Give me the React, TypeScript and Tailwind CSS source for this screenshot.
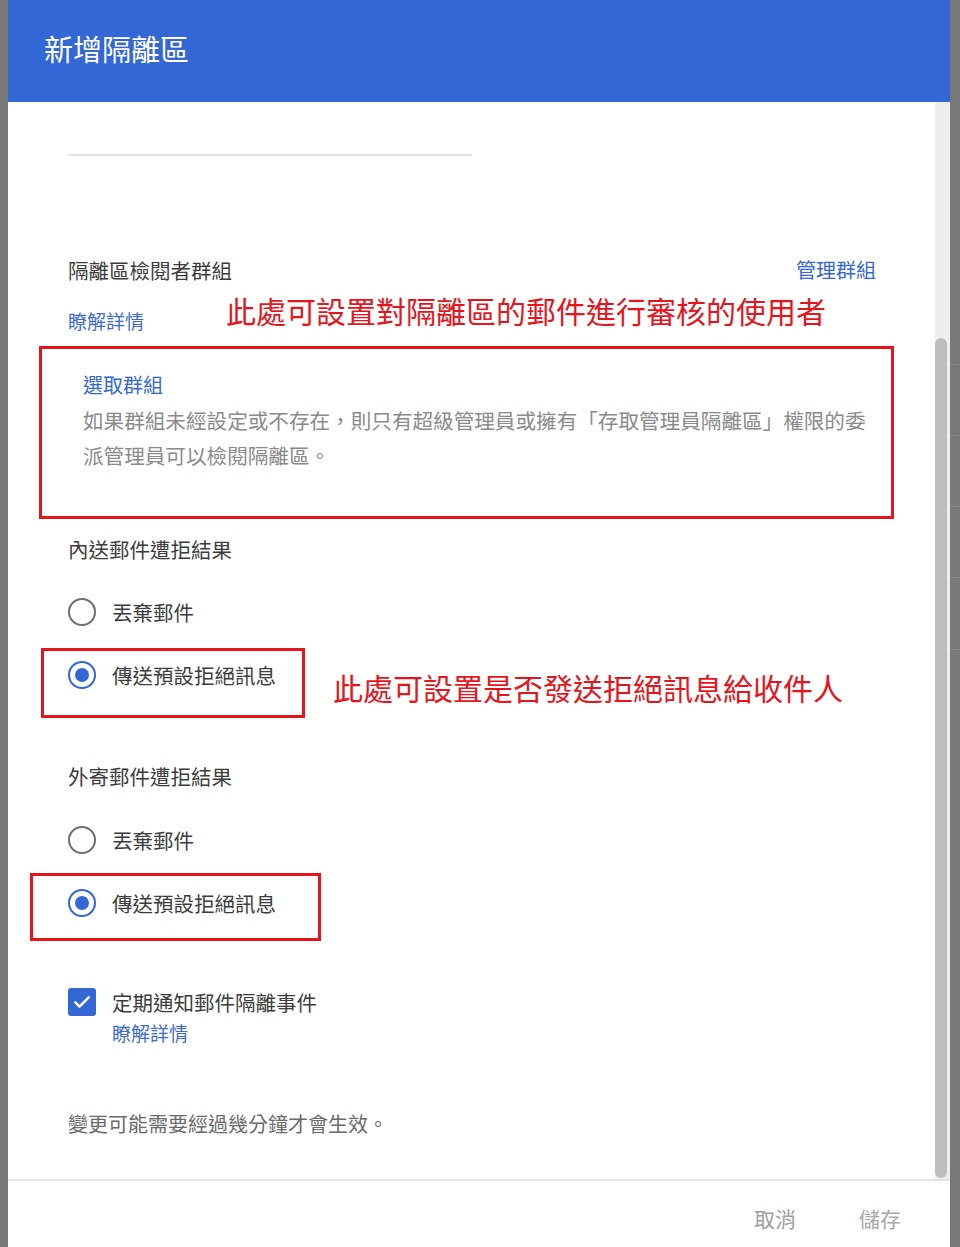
import React from "react";

const Radio: React.FC<{ checked?: boolean }> = ({ checked }) => (
  <span
    className={`flex h-[28px] w-[28px] shrink-0 items-center justify-center rounded-full border-[2.5px] ${
      checked ? "border-[#3367d6]" : "border-[#6f6f6f]"
    }`}
  >
    {checked && <span className="h-[14px] w-[14px] rounded-full bg-[#3367d6]" />}
  </span>
);

const RadioRow: React.FC<{ label: string; checked?: boolean }> = ({ label, checked }) => (
  <div className="flex items-center gap-[16px]">
    <Radio checked={checked} />
    <span className="text-[20.5px] leading-[28px] text-[#3c3c3c]">{label}</span>
  </div>
);

const App: React.FC = () => {
  return (
    <div className="flex h-[1247px] w-[960px] overflow-hidden bg-[#777777] font-['Noto_Sans_CJK_TC',sans-serif]">
      {/* backdrop left */}
      <div className="w-[8px] shrink-0 bg-[#7a7a7a]" />

      {/* Dialog */}
      <div className="flex w-[942px] shrink-0 flex-col bg-white">
        {/* Header */}
        <div className="flex h-[102px] shrink-0 items-start bg-[#3367d6] pl-[36px] pt-[28px]">
          <h1 className="text-[29px] leading-[40px] text-white">新增隔離區</h1>
        </div>

        {/* Body */}
        <div className="flex h-[1077px] shrink-0">
          <div className="flex flex-1 flex-col pl-[60px]">
            <div className="mt-[52px] h-[2px] w-[404px] bg-[#e3e3e3]" />

            <div className="mt-[100px] flex w-[808px] items-center justify-between">
              <span className="text-[20.5px] leading-[28px] text-[#3c3c3c]">隔離區檢閱者群組</span>
              <span className="text-[20px] leading-[28px] text-[#3367d6]">管理群組</span>
            </div>

            <div className="mt-[6px] flex items-start">
              <span className="mt-[18px] text-[19px] leading-[26px] text-[#3d6ad6]">瞭解詳情</span>
              <span className="ml-[82px] text-[30px] leading-[40px] text-[#e8141c]">
                此處可設置對隔離區的郵件進行審核的使用者
              </span>
            </div>

            <div className="-ml-[29px] mt-[12px] w-[855px] border-[3px] border-[#e8141c] pb-[43px] pl-[41px] pt-[22px]">
              <div className="text-[20px] leading-[28px] text-[#3367d6]">選取群組</div>
              <p className="mt-[4px] w-[800px] whitespace-nowrap text-[20.6px] leading-[35px] text-[#8a8a8a]">
                如果群組未經設定或不存在，則只有超級管理員或擁有「存取管理員隔離區」權限的委
                <br />
                派管理員可以檢閱隔離區。
              </p>
            </div>

            <div className="mt-[16px] text-[20.5px] leading-[28px] text-[#3c3c3c]">內送郵件遭拒結果</div>
            <div className="mt-[35px]">
              <RadioRow label="丟棄郵件" />
            </div>
            <div className="mt-[22px] flex items-center">
              <div className="-ml-[27px] w-[264px] border-[3px] border-[#e8141c] pb-[26px] pl-[24px] pt-[10px]">
                <RadioRow label="傳送預設拒絕訊息" checked />
              </div>
              <span className="ml-[28px] mt-[8px] text-[30px] leading-[40px] text-[#e8141c]">
                此處可設置是否發送拒絕訊息給收件人
              </span>
            </div>

            <div className="mt-[44px] text-[20.5px] leading-[28px] text-[#3c3c3c]">外寄郵件遭拒結果</div>
            <div className="mt-[36px]">
              <RadioRow label="丟棄郵件" />
            </div>
            <div className="-ml-[38px] mt-[19px] w-[291px] border-[3px] border-[#e8141c] pb-[21px] pl-[35px] pt-[13px]">
              <RadioRow label="傳送預設拒絕訊息" checked />
            </div>

            <div className="mt-[47px] flex items-start gap-[16px]">
              <span className="flex h-[28px] w-[28px] shrink-0 items-center justify-center rounded-[3px] bg-[#3367d6]">
                <svg width="20" height="20" viewBox="0 0 24 24" fill="none">
                  <path d="M4 12.5l5 5L20 6.5" stroke="white" strokeWidth="3" strokeLinecap="round" strokeLinejoin="round" />
                </svg>
              </span>
              <div className="flex flex-col">
                <span className="text-[20.5px] leading-[28px] text-[#3c3c3c]">定期通知郵件隔離事件</span>
                <span className="mt-[4px] text-[19px] leading-[26px] text-[#3d6ad6]">瞭解詳情</span>
              </div>
            </div>

            <div className="mt-[64px] text-[20px] leading-[28px] text-[#6a6a6a]">變更可能需要經過幾分鐘才會生效。</div>
          </div>

          {/* Scrollbar */}
          <div className="flex w-[15px] shrink-0 flex-col bg-[#eeeeee]">
            <div className="mt-[236px] h-[840px] w-[12px] rounded-full bg-[#bdbdbd]" />
          </div>
        </div>

        {/* Footer */}
        <div className="flex flex-1 justify-end gap-[63px] border-t-2 border-[#e3e3e3] pr-[49px] pt-[22px]">
          <button className="h-[30px] text-[21px] leading-[30px] text-[#9e9e9e]">取消</button>
          <button className="h-[30px] text-[21px] leading-[30px] text-[#a8a8a8]">儲存</button>
        </div>
      </div>

      {/* backdrop right */}
      <div className="flex w-[10px] shrink-0 flex-col bg-[#787878]">
        <div className="mt-[364px] h-px bg-[#8a8a8a]" />
        <div className="mt-[70px] h-px bg-[#8a8a8a]" />
        <div className="mt-[70px] h-px bg-[#8a8a8a]" />
        <div className="mt-[70px] h-px bg-[#8a8a8a]" />
        <div className="mt-[71px] h-px bg-[#8a8a8a]" />
      </div>
    </div>
  );
};

export default App;
